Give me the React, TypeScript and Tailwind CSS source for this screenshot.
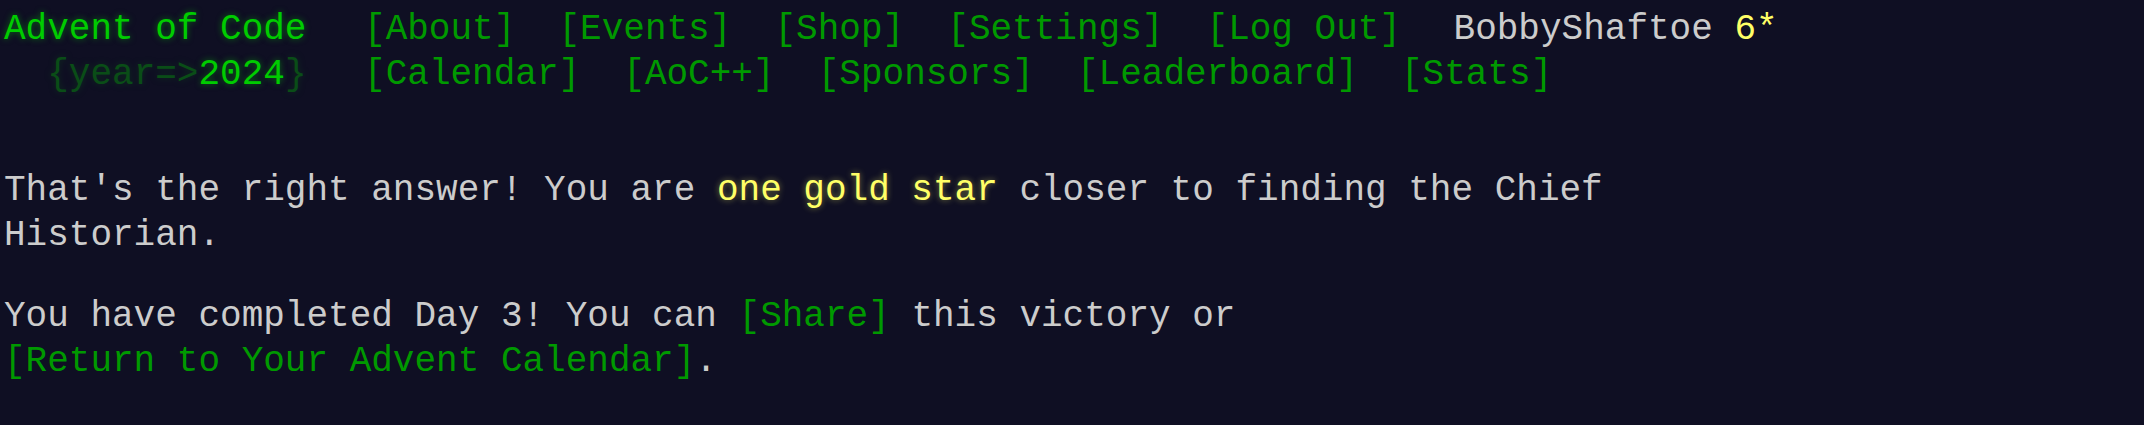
import React from "react";

const globalLinks = ["[About]", "[Events]", "[Shop]", "[Settings]", "[Log Out]"];
const eventLinks = ["[Calendar]", "[AoC++]", "[Sponsors]", "[Leaderboard]", "[Stats]"];

const glow = "[text-shadow:0_0_6px_rgba(0,204,0,0.5)]";

const NavList = ({ items }: { items: string[] }) => (
  <nav>
    <ul className="flex">
      {items.map((item) => (
        <li key={item} className="px-[21.6px]">
          <a href="#" className="text-[#009900] hover:text-[#99ff99]">
            {item}
          </a>
        </li>
      ))}
    </ul>
  </nav>
);

export default function App() {
  return (
    <div className="min-h-screen bg-[#0f0f23] pl-[4px] pt-[7px] font-['Liberation_Mono',monospace] text-[36px] leading-[45px] text-[#cccccc]">
      <header className="mb-[71px] whitespace-nowrap">
        {/* Global row */}
        <div className="flex">
          <h1 className={`pr-[36px] font-normal text-[#00cc00] ${glow}`}>
            <a href="#">Advent of Code</a>
          </h1>
          <NavList items={globalLinks} />
          <div className="ml-[31px]">
            BobbyShaftoe <span className="text-[#ffff66]">6*</span>
          </div>
        </div>

        {/* Event row */}
        <div className="flex">
          <h1 className={`whitespace-pre pr-[36px] font-normal text-[#00cc00] ${glow}`}>
            {"  "}
            <span className="opacity-[0.33]">{"{year=>"}</span>
            <a href="#">2024</a>
            <span className="opacity-[0.33]">{"}"}</span>
          </h1>
          <NavList items={eventLinks} />
        </div>
      </header>

      <main>
        <article className="w-[1620px]">
          <p>
            That's the right answer! You are{" "}
            <span className="text-[#ffff66] [text-shadow:0_0_6px_rgba(255,255,102,0.45)]">one gold star</span>{" "}
            closer to finding the Chief Historian.
          </p>
          <p className="mt-[36px]">
            You have completed Day 3! You can{" "}
            <a href="#" className="whitespace-nowrap text-[#009900]">
              [Share]
            </a>{" "}
            this victory or{" "}
            <a href="#" className="whitespace-nowrap text-[#009900]">
              [Return to Your Advent Calendar]
            </a>
            .
          </p>
        </article>
      </main>
    </div>
  );
}
